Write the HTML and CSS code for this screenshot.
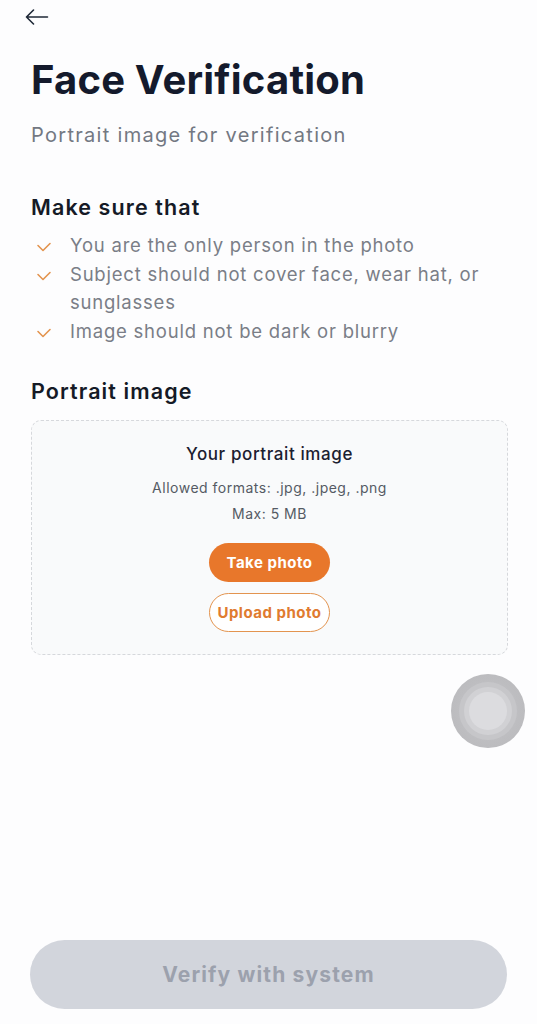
FILE: index.html
```html
<!DOCTYPE html>
<html lang="en">
<head>
<meta charset="utf-8">
<title>Face Verification</title>
<link rel="stylesheet" href="styles.css">
</head>
<body>
<div class="screen">
  <main class="content">
    <header class="topbar">
      <button class="back" aria-label="Back">
        <svg width="24" height="16" viewBox="0 0 24 16" fill="none" stroke="#1f2937" stroke-width="1.6" stroke-linecap="round" stroke-linejoin="round">
          <path d="M22.5 8H1.5M8.5 1L1.5 8l7 7"/>
        </svg>
      </button>
    </header>
    <h1 class="title">Face Verification</h1>
    <p class="subtitle">Portrait image for verification</p>

    <h2 class="section-title">Make sure that</h2>
    <ul class="checklist">
      <li><span class="check"><svg width="16" height="12" viewBox="0 0 16 12" fill="none" stroke="#e3944f" stroke-width="1.6" stroke-linecap="round" stroke-linejoin="round"><path d="M2 4.5l5 5 7-7"/></svg></span><span>You are the only person in the photo</span></li>
      <li><span class="check"><svg width="16" height="12" viewBox="0 0 16 12" fill="none" stroke="#e3944f" stroke-width="1.6" stroke-linecap="round" stroke-linejoin="round"><path d="M2 4.5l5 5 7-7"/></svg></span><span>Subject should not cover face, wear hat, or sunglasses</span></li>
      <li><span class="check"><svg width="16" height="12" viewBox="0 0 16 12" fill="none" stroke="#e3944f" stroke-width="1.6" stroke-linecap="round" stroke-linejoin="round"><path d="M2 4.5l5 5 7-7"/></svg></span><span>Image should not be dark or blurry</span></li>
    </ul>

    <h2 class="section-title portrait-title">Portrait image</h2>
    <section class="dropzone">
      <p class="dz-title">Your portrait image</p>
      <p class="dz-info">Allowed formats: .jpg, .jpeg, .png</p>
      <p class="dz-info dz-max">Max: 5 MB</p>
      <div class="dz-actions">
        <button class="btn btn-primary">Take photo</button>
        <button class="btn btn-outline">Upload photo</button>
      </div>
    </section>
  </main>

  <footer class="footer">
    <button class="verify" disabled>Verify with system</button>
  </footer>

  <div class="assistive" aria-hidden="true"><div class="assistive-inner"></div></div>
</div>
</body>
</html>
```

FILE: styles.css
```css
* { box-sizing: border-box; }
html, body { margin: 0; padding: 0; }
body {
  background: #fdfdfe;
  font-family: Inter, "Noto Sans", sans-serif;
  color: #111827;
}
.screen {
  position: relative;
  min-height: 1024px;
  display: flex;
  flex-direction: column;
}
.content {
  padding: 0 30px 0 31px;
}
.topbar {
  height: 34px;
  display: flex;
  align-items: center;
}
.back {
  border: 0;
  background: none;
  padding: 0;
  margin-left: -6px;
  width: 24px;
  height: 16px;
  display: flex;
}
.title {
  margin: 22px 0 0;
  font-size: 40px;
  line-height: 48px;
  font-weight: 700;
  color: #141a2c;
  letter-spacing: 0.2px;
}
.subtitle {
  margin: 18px 0 0;
  font-size: 20px;
  line-height: 26px;
  color: #737882;
  letter-spacing: 1.3px;
}
.section-title {
  margin: 45px 0 0;
  font-size: 21.5px;
  line-height: 28px;
  font-weight: 600;
  color: #151a26;
  letter-spacing: 1.1px;
}
.checklist {
  list-style: none;
  margin: 10px 0 0;
  padding: 0;
  display: flex;
  flex-direction: column;
  gap: 1px;
}
.checklist li {
  display: flex;
  align-items: flex-start;
  font-size: 18.5px;
  line-height: 28px;
  color: #7a7e87;
  letter-spacing: 0.78px;
}
.check {
  width: 39px;
  flex: none;
  display: flex;
  padding-top: 10px;
  padding-left: 5px;
}
.portrait-title {
  margin-top: 32px;
}
.dropzone {
  margin-top: 15px;
  margin-right: -1px;
  border: 1.5px dashed #d6d8dc;
  border-radius: 10px;
  background: #f9fafb;
  padding: 21px 0 22px;
  display: flex;
  flex-direction: column;
  align-items: center;
  text-align: center;
}
.dz-title {
  margin: 0;
  font-size: 17px;
  line-height: 24px;
  font-weight: 500;
  color: #1b2030;
  letter-spacing: 0.6px;
}
.dz-info {
  margin: 12px 0 0;
  font-size: 14px;
  line-height: 20px;
  color: #555a64;
  letter-spacing: 0.5px;
}
.dz-max {
  margin-top: 6px;
}
.dz-actions {
  margin-top: 19px;
  display: flex;
  flex-direction: column;
  gap: 11px;
}
.btn {
  width: 121px;
  height: 39px;
  border-radius: 20px;
  font-family: inherit;
  font-size: 15px;
  font-weight: 700;
  letter-spacing: 0.5px;
  padding: 0;
}
.btn-primary {
  background: #e8772b;
  border: 0;
  color: #fff;
}
.btn-outline {
  background: #fff;
  border: 1.5px solid #e3944f;
  color: #e07b30;
}
.footer {
  margin-top: auto;
  padding: 0 30px 15px;
}
.verify {
  width: 100%;
  height: 69px;
  border: 0;
  border-radius: 35px;
  background: #d2d5dc;
  color: #9ca1ad;
  font-family: inherit;
  font-size: 21px;
  font-weight: 700;
  letter-spacing: 1.15px;
}
.assistive {
  position: absolute;
  left: 451px;
  top: 674px;
  width: 74px;
  height: 74px;
  border-radius: 50%;
  background: radial-gradient(circle, #c9c9cc 0%, #bdbdc0 60%, #b9b9bc 100%);
  display: flex;
  align-items: center;
  justify-content: center;
}
.assistive-inner {
  width: 38px;
  height: 38px;
  border-radius: 50%;
  background: #dcdcdf;
  box-shadow: 0 0 0 5px #d1d1d4, 0 0 0 10px #c6c6c9;
}
```
